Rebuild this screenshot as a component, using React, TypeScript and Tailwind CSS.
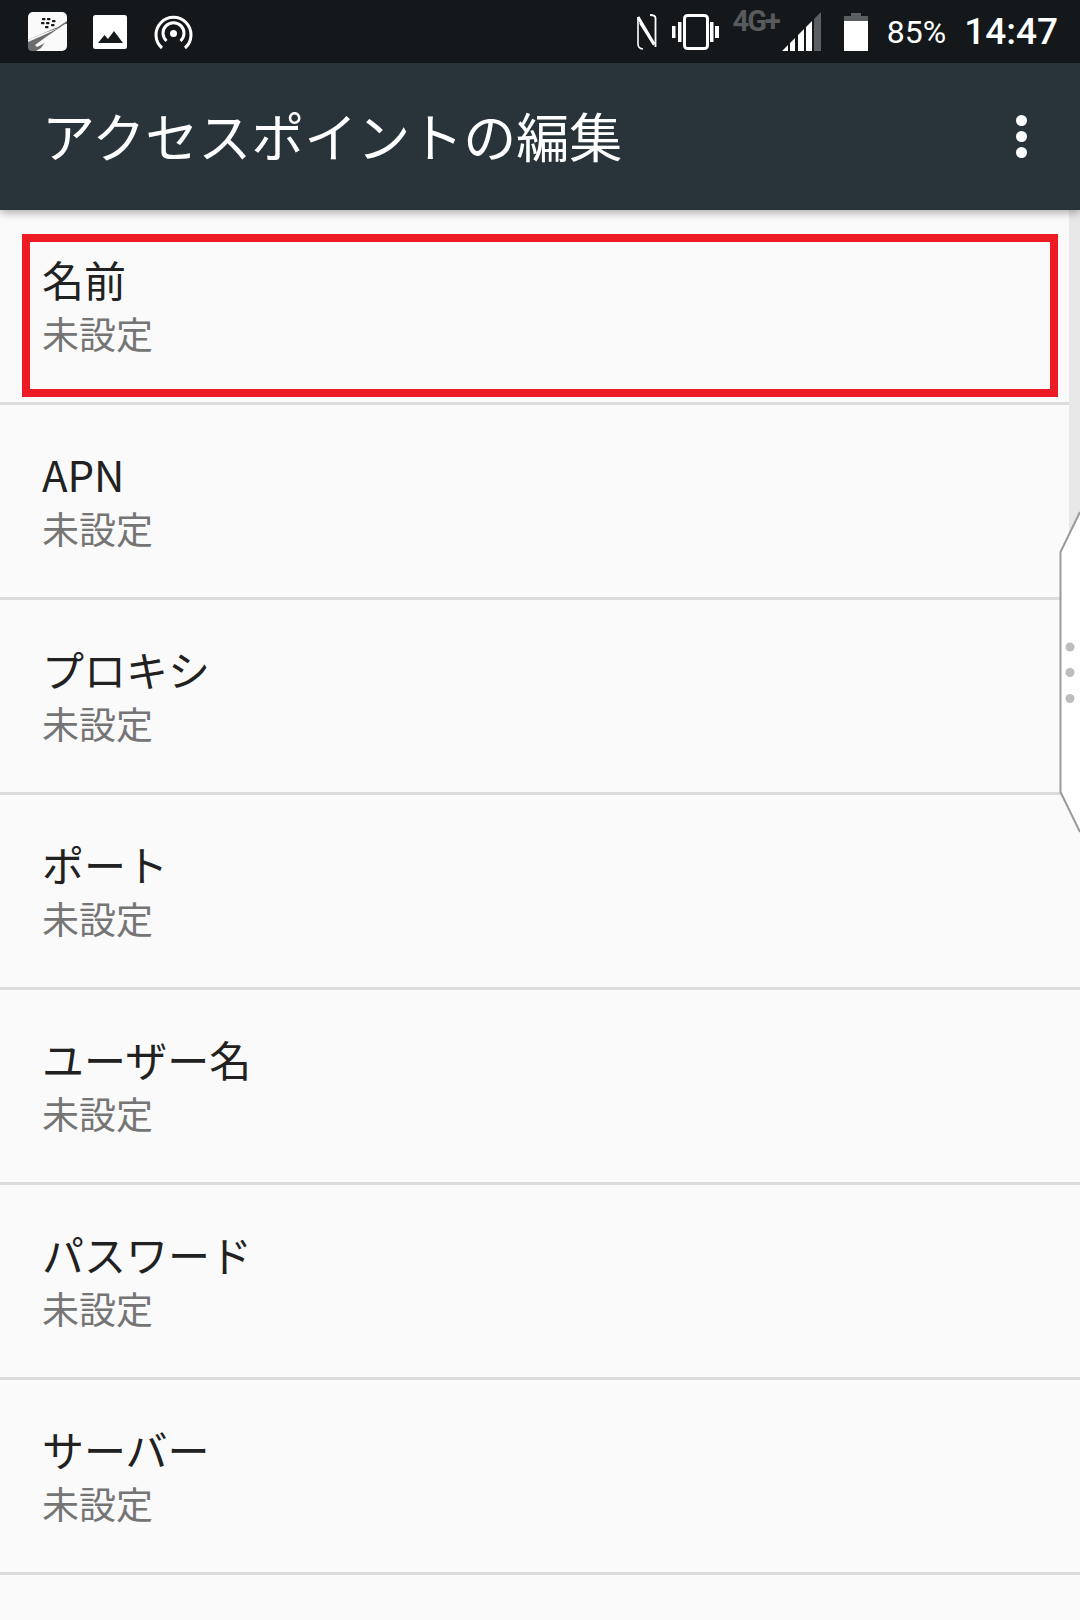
const rows = ["名前", "APN", "プロキシ", "ポート", "ユーザー名", "パスワード", "サーバー"];

function BbIcon() {
  return (
    <svg width="39" height="39" viewBox="0 0 39 39" className="shrink-0">
      <rect width="39" height="39" rx="5" fill="#fafafa" />
      <path d="M0 28 L18 20 L30 15 L39 9 L39 12 L28 22 L18 29 L13 36 L8 39 L4 39 Q0 39 0 35 Z" fill="#6a6c6d" />
      <path d="M7 33 L18 25 L37 12 L39 12 L39 15 L27 24 L15 32 L9 35 Z" fill="#fafafa" />
      <path d="M0 30 L16 23 L31 16 L16 21 L0 28 Z" fill="#fafafa" />
      <g fill="#16191c">
        <rect x="14" y="6" width="3.5" height="2.2" rx="0.7" />
        <rect x="19" y="6" width="3.5" height="2.2" rx="0.7" />
        <rect x="13" y="10" width="3.5" height="2.2" rx="0.7" />
        <rect x="18" y="10" width="3.5" height="2.2" rx="0.7" />
        <rect x="24" y="8" width="3.5" height="2.2" rx="0.7" />
        <rect x="17" y="14" width="3.5" height="2.2" rx="0.7" />
        <rect x="23" y="12" width="3.5" height="2.2" rx="0.7" />
      </g>
    </svg>
  );
}

function ImageIcon() {
  return (
    <svg width="34" height="34" viewBox="0 0 34 34" className="shrink-0">
      <rect width="34" height="34" rx="2.5" fill="#fff" />
      <path d="M5 28 L11.5 20 L15 24 L21 16 L30 28 Z" fill="#16191c" />
    </svg>
  );
}

function HotspotIcon() {
  return (
    <svg width="39" height="36" viewBox="0 0 39 36" className="shrink-0" fill="none" stroke="#fff">
      <path d="M8 34 A17.5 17.5 0 1 1 31 34" strokeWidth="3" />
      <path d="M12.5 27 A10.5 10.5 0 1 1 26.5 27" strokeWidth="3" />
      <circle cx="19.5" cy="19.5" r="3.5" fill="#fff" stroke="none" />
    </svg>
  );
}

function NfcIcon() {
  return (
    <svg width="20" height="36" viewBox="0 0 20 36" fill="none" stroke="#fff">
      <path d="M6 35 C2 34.5 1 33 1 30 L1 4 L1 3" strokeWidth="1.6" />
      <path d="M1 3 L14 25 L17 30" strokeWidth="3" />
      <path d="M3 9 L17 31" strokeWidth="2" />
      <path d="M18.5 33 L18.5 4 C18.5 2 17 1 13 1" strokeWidth="1.8" />
    </svg>
  );
}

function VibrateIcon() {
  return (
    <svg width="47" height="36" viewBox="0 0 47 36" fill="#fff">
      <rect x="0" y="12" width="3.5" height="12" />
      <rect x="6" y="8" width="3.5" height="20" />
      <rect x="12.5" y="1.5" width="23" height="33" rx="3" fill="none" stroke="#fff" strokeWidth="3" />
      <rect x="38" y="8" width="3.5" height="20" />
      <rect x="43" y="12" width="4" height="12" />
    </svg>
  );
}

function SignalIcon() {
  return (
    <svg width="39" height="39" viewBox="0 0 39 39">
      <path d="M32 39 L32 7 L39 0 L39 39 Z" fill="#5c5f61" />
      <path d="M0 39 L6 33 L6 39 Z M8 39 L8 31 L13 26 L13 39 Z M16 39 L16 23 L22 17 L22 39 Z M24 39 L24 15 L30 9 L30 39 Z" fill="#fff" />
    </svg>
  );
}

function BatteryIcon() {
  return (
    <svg width="24" height="38" viewBox="0 0 24 38">
      <path d="M7 0 H17 V3 H24 V38 H0 V3 H7 Z" fill="#5c5f61" />
      <rect x="0" y="8" width="24" height="30" fill="#fff" />
    </svg>
  );
}

export default function App() {
  return (
    <div className="relative w-[1080px] h-[1620px] overflow-hidden bg-[#fafafa] font-['Noto_Sans_CJK_JP','Noto_Sans_CJK_SC',sans-serif]">
      <header className="flex h-[63px] items-center justify-between bg-[#14181b] pl-[28px] pr-[22px]">
        <div className="flex items-center">
          <BbIcon />
          <div className="ml-[26px]"><ImageIcon /></div>
          <div className="ml-[27px]"><HotspotIcon /></div>
        </div>
        <div className="flex items-center font-['Roboto',sans-serif] text-white">
          <NfcIcon />
          <div className="ml-[15px]"><VibrateIcon /></div>
          <span className="ml-[14px] mb-[20px] text-[29px] font-bold leading-none tracking-[-2px] text-[#585b5d]">4G+</span>
          <div className="ml-[3px]"><SignalIcon /></div>
          <div className="ml-[23px]"><BatteryIcon /></div>
          <span className="ml-[19px] text-[32px] leading-none">85%</span>
          <span className="ml-[18px] text-[37px] font-medium leading-none">14:47</span>
        </div>
      </header>

      <div className="relative z-10 flex h-[147px] items-center justify-between bg-[#28333a] pl-[42px] pr-[53px] shadow-[0_3px_8px_rgba(0,0,0,0.3)]">
        <h1 className="mb-[3px] text-[53px] font-normal leading-none text-white">アクセスポイントの編集</h1>
        <div className="flex flex-col gap-[5px]">
          <span className="h-[11px] w-[11px] rounded-full bg-white" />
          <span className="h-[11px] w-[11px] rounded-full bg-white" />
          <span className="h-[11px] w-[11px] rounded-full bg-white" />
        </div>
      </div>

      <main className="relative">
        {rows.map((title) => (
          <div key={title} className="h-[195px] border-b-[3px] border-[#dcdcdc] pl-[42px] pt-[44px]">
            <div className="text-[42px] leading-[50px] text-[#212121]">{title}</div>
            <div className="mt-[5px] text-[37px] leading-[48px] text-[#757575]">未設定</div>
          </div>
        ))}
        <div className="absolute left-[22px] top-[24px] h-[163px] w-[1036px] border-[8px] border-[#ed1c24]" />
        <div className="absolute right-0 top-0 h-[330px] w-[11px] bg-[#e8e8e8]" />
      </main>

      <svg className="absolute left-[1059px] top-[510px]" width="21" height="324" viewBox="0 0 21 324">
        <path d="M21 2 L1.5 42 L1.5 282 L21 322 Z" fill="#fff" />
        <path d="M21 2 L1.5 42 L1.5 282 L21 322" fill="none" stroke="#9a9a9a" strokeWidth="2" />
        <circle cx="11" cy="137" r="4.5" fill="#bdbdbd" />
        <circle cx="11" cy="162.5" r="4.5" fill="#bdbdbd" />
        <circle cx="11" cy="188.5" r="4.5" fill="#bdbdbd" />
      </svg>
    </div>
  );
}
